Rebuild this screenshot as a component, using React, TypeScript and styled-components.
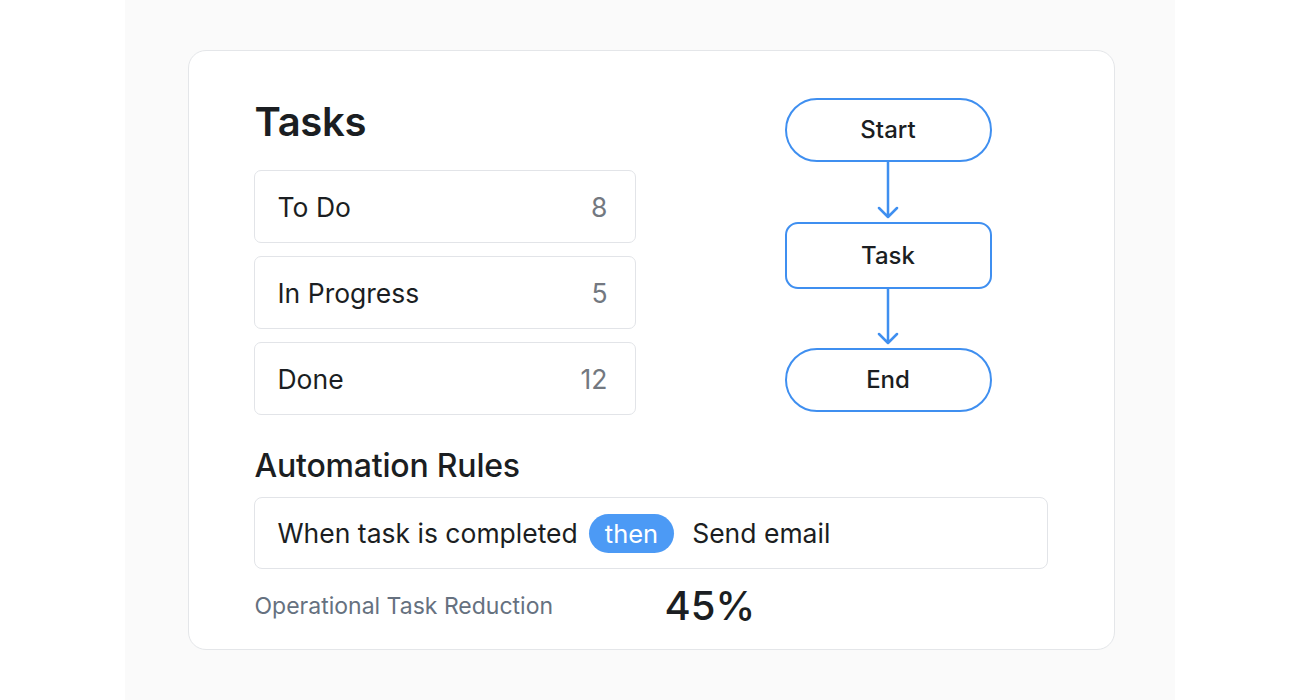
import styled, { createGlobalStyle } from "styled-components";

const GlobalStyle = createGlobalStyle`
  html, body {
    margin: 0;
    padding: 0;
    background: #ffffff;
  }
  body {
    font-family: Inter, "Noto Sans", "Liberation Sans", sans-serif;
    color: #1b1e22;
  }
`;

const Page = styled.div`
  width: 1303px;
  height: 700px;
  display: flex;
  justify-content: center;
`;

const Backdrop = styled.div`
  width: 1050px;
  margin-left: -3px;
  height: 100%;
  background: #fafafa;
  display: flex;
  justify-content: center;
  padding-top: 50px;
  box-sizing: border-box;
`;

const Card = styled.div`
  width: 927px;
  height: 600px;
  margin-left: 2px;
  box-sizing: border-box;
  background: #ffffff;
  border: 1px solid #e4e6e9;
  border-radius: 18px;
  padding: 47px 66px 0 65px;
  display: flex;
  flex-direction: column;
`;

const TopRow = styled.div`
  display: flex;
  align-items: flex-start;
  gap: 149px;
`;

const TaskColumn = styled.div`
  width: 382px;
  display: flex;
  flex-direction: column;
`;

const Title = styled.h1`
  margin: 0 0 24px 1px;
  font-size: 40px;
  line-height: 48px;
  font-weight: 600;
  letter-spacing: -0.3px;
`;

const TaskList = styled.div`
  display: flex;
  flex-direction: column;
  gap: 13px;
`;

const TaskRow = styled.div`
  height: 73px;
  box-sizing: border-box;
  border: 1px solid #e2e4e8;
  border-radius: 7px;
  display: flex;
  align-items: center;
  justify-content: space-between;
  padding: 0 27px 0 23px;
  font-size: 26.5px;
`;

const Count = styled.span`
  color: #737880;
`;

const Flow = styled.div`
  width: 207px;
  display: flex;
  flex-direction: column;
  align-items: center;
`;

const Node = styled.div<{ $pill?: boolean; $h: number }>`
  width: 207px;
  height: ${(p) => p.$h}px;
  box-sizing: border-box;
  border: 2.5px solid #3f8ff0;
  border-radius: ${(p) => (p.$pill ? "999px" : "13px")};
  display: flex;
  align-items: center;
  justify-content: center;
  font-size: 24px;
  font-weight: 500;
  padding-bottom: 1px;
`;

const Arrow = ({ h }: { h: number }) => (
  <svg width="30" height={h} viewBox={`0 0 30 ${h}`} style={{ display: "block" }}>
    <path
      d={`M15 0 V${h - 6} M6 ${h - 14} L15 ${h - 5} L24 ${h - 14}`}
      fill="none"
      stroke="#3f8ff0"
      strokeWidth="2.5"
      strokeLinecap="round"
      strokeLinejoin="round"
    />
  </svg>
);

const SectionTitle = styled.h2`
  margin: 33px 0 13px 1px;
  font-size: 32px;
  line-height: 36px;
  font-weight: 500;
  letter-spacing: -0.2px;
`;

const RuleBox = styled.div`
  height: 72px;
  width: 794px;
  box-sizing: border-box;
  border: 1px solid #e2e4e8;
  border-radius: 8px;
  display: flex;
  align-items: center;
  padding: 0 24px 0 23px;
  font-size: 26.5px;
`;

const ThenPill = styled.span`
  background: #4c9af5;
  color: #ffffff;
  border-radius: 999px;
  height: 39px;
  padding: 0 16px;
  margin: 0 18px 0 11px;
  display: inline-flex;
  align-items: center;
  font-size: 25.5px;
`;

const StatRow = styled.div`
  margin-top: 12px;
  display: flex;
  align-items: center;
  margin-left: 1px;
`;

const StatLabel = styled.span`
  width: 410px;
  font-size: 23px;
  color: #66717f;
`;

const StatValue = styled.span`
  font-size: 40px;
  font-weight: 500;
`;

const tasks = [
  { label: "To Do", count: 8 },
  { label: "In Progress", count: 5 },
  { label: "Done", count: 12 },
];

export default function App() {
  return (
    <>
      <GlobalStyle />
      <Page>
        <Backdrop>
          <Card>
            <TopRow>
              <TaskColumn>
                <Title>Tasks</Title>
                <TaskList>
                  {tasks.map((t) => (
                    <TaskRow key={t.label}>
                      <span>{t.label}</span>
                      <Count>{t.count}</Count>
                    </TaskRow>
                  ))}
                </TaskList>
              </TaskColumn>
              <Flow>
                <Node $pill $h={64}>Start</Node>
                <Arrow h={60} />
                <Node $h={67}>Task</Node>
                <Arrow h={59} />
                <Node $pill $h={64}>End</Node>
              </Flow>
            </TopRow>
            <SectionTitle>Automation Rules</SectionTitle>
            <RuleBox>
              When task is completed
              <ThenPill>then</ThenPill>
              Send email
            </RuleBox>
            <StatRow>
              <StatLabel>Operational Task Reduction</StatLabel>
              <StatValue>45%</StatValue>
            </StatRow>
          </Card>
        </Backdrop>
      </Page>
    </>
  );
}
